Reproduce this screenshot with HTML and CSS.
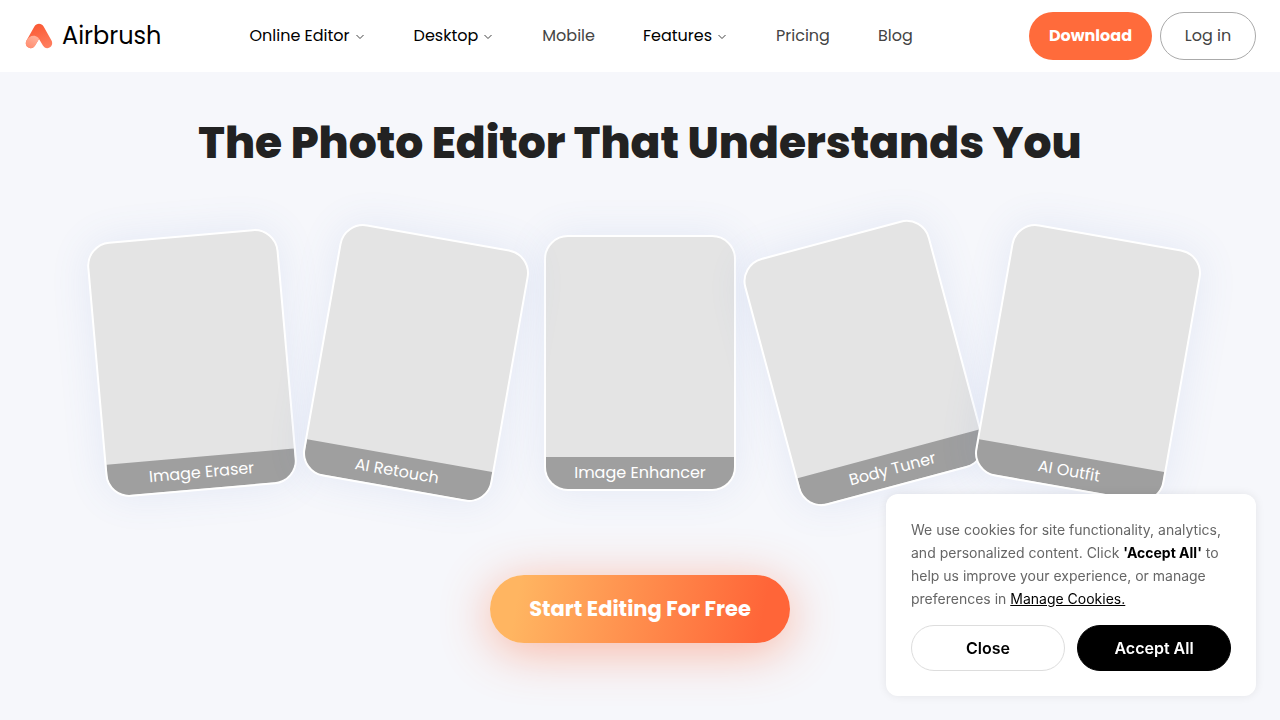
FILE: index.html
```html
<!DOCTYPE html>
<html lang="en">
<head>
    <meta charset="UTF-8">
    <meta name="viewport" content="width=device-width, initial-scale=1">
    <title>Airbrush</title>
    <link rel="stylesheet" href="styles.css">
</head>
<body>
    <header class="header">
        <a class="logo" href="#">
            <svg class="logo-icon" width="28" height="28" viewBox="0 0 28 28" fill="none" aria-hidden="true">
                <defs>
                    <linearGradient id="logoMain" x1="14" y1="2" x2="22" y2="26" gradientUnits="userSpaceOnUse">
                        <stop offset="0" stop-color="#fa5a35"/>
                        <stop offset="1" stop-color="#ff7f60"/>
                    </linearGradient>
                    <linearGradient id="logoFold" x1="11" y1="14" x2="4" y2="26" gradientUnits="userSpaceOnUse">
                        <stop offset="0" stop-color="#ffb29c"/>
                        <stop offset="1" stop-color="#ff8d70"/>
                    </linearGradient>
                </defs>
                <path d="M9.4 4.400C11.500 1 16.500 1 18.600 4.400L26.500 18.500C28 21.400 26.900 24.400 24.500 25.600C22 26.800 19.300 26 17.900 23.600L14 17L10.100 23.600C8.700 26 6 26.800 3.500 25.600C1.100 24.400 0 21.400 1.500 18.500Z" fill="url(#logoMain)"/>
                <path d="M1.500 18.500C3.600 14.600 8.600 11.800 13 15.600C13.600 16.200 13.800 16.600 14 17L10.100 23.600C8.700 26 6 26.800 3.500 25.600C1.100 24.400 0 21.400 1.500 18.500Z" fill="url(#logoFold)"/>
            </svg>
            <span>Airbrush</span>
        </a>

        <nav class="nav">
            <button class="nav-item nav-menu" type="button">Online Editor
                <svg class="chevron" width="12" height="12" viewBox="0 0 12 12" aria-hidden="true"><path d="M2.500 5L6 8.500L9.500 5"/></svg>
            </button>
            <button class="nav-item nav-menu" type="button">Desktop
                <svg class="chevron" width="12" height="12" viewBox="0 0 12 12" aria-hidden="true"><path d="M2.500 5L6 8.500L9.500 5"/></svg>
            </button>
            <a class="nav-item" href="#">Mobile</a>
            <button class="nav-item nav-menu" type="button">Features
                <svg class="chevron" width="12" height="12" viewBox="0 0 12 12" aria-hidden="true"><path d="M2.500 5L6 8.500L9.500 5"/></svg>
            </button>
            <a class="nav-item" href="#">Pricing</a>
            <a class="nav-item" href="#">Blog</a>
        </nav>

        <div class="actions">
            <a class="btn btn-download" href="#">Download</a>
            <button class="btn btn-login" type="button">Log in</button>
        </div>
    </header>

    <main class="hero">
        <h1>The Photo Editor That Understands You</h1>

        <div class="cards">
            <a class="card tilt-left" href="#"><span class="card-label">Image Eraser</span></a>
            <a class="card tilt-right" href="#"><span class="card-label">AI Retouch</span></a>
            <a class="card" href="#"><span class="card-label">Image Enhancer</span></a>
            <a class="card tilt-left-more" href="#"><span class="card-label">Body Tuner</span></a>
            <a class="card tilt-right" href="#"><span class="card-label">AI Outfit</span></a>
        </div>

        <a class="cta" href="#">Start Editing For Free</a>
    </main>

    <section class="cookies" aria-label="Cookies">
        <p>We use cookies for site functionality, analytics, and personalized content. Click <strong>'Accept All'</strong> to help us improve your experience, or manage preferences in <a href="#">Manage Cookies.</a></p>
        <div class="cookies-buttons">
            <button class="btn-close" type="button">Close</button>
            <button class="btn-accept" type="button">Accept All</button>
        </div>
    </section>
</body>
</html>
```

FILE: styles.css
```css
* {
    box-sizing: border-box;
}

body {
    margin: 0;
    min-height: 100vh;
    background: #f6f7fb;
    color: #222;
    font-family: Poppins, Inter, sans-serif;
    font-size: 16px;
    overflow-x: hidden;
}

a {
    color: inherit;
    text-decoration: none;
}

button {
    font: inherit;
    cursor: pointer;
}

.header {
    display: flex;
    align-items: center;
    height: 72px;
    padding: 0 24px;
    background: #fff;
}

.logo {
    display: flex;
    align-items: center;
    gap: 9px;
    padding-left: 1px;
    color: #000;
    font-size: 24px;
    line-height: 36px;
}

.nav {
    display: flex;
    align-items: center;
    gap: 48px;
    margin-left: 88px;
}

.nav-item {
    display: flex;
    align-items: center;
    gap: 4px;
    padding: 0;
    border: none;
    background: none;
    color: #444;
    line-height: 24px;
    white-space: nowrap;
}

.nav-menu {
    color: #000;
}

.chevron {
    fill: none;
    stroke: #444;
    stroke-width: 1;
}

.actions {
    display: flex;
    gap: 8px;
    margin-left: auto;
}

.btn {
    display: flex;
    align-items: center;
    justify-content: center;
    height: 48px;
    padding: 0 20px 2px;
    border-radius: 24px;
    white-space: nowrap;
}

.btn-download {
    background: #ff6b3b;
    color: #fff;
    font-weight: 700;
}

.btn-login {
    min-width: 96px;
    border: 1px solid #aaa;
    background: #fff;
    color: #444;
}

.hero {
    display: flex;
    flex-direction: column;
    align-items: center;
    padding: 35px 24px 76px;
}

h1 {
    margin: 0;
    font-size: 44px;
    font-weight: 800;
    line-height: 72px;
    text-align: center;
}

.cards {
    display: flex;
    justify-content: center;
    gap: 32px;
    margin-top: 56px;
}

.card {
    display: flex;
    flex-direction: column;
    justify-content: flex-end;
    width: 192px;
    height: 256px;
    border: 2px solid #fff;
    border-radius: 24px;
    background: #e4e4e4;
    box-shadow: 0 0 40px rgba(80, 120, 200, 0.11);
    overflow: hidden;
}

.card-label {
    background: #9f9f9f;
    color: #fff;
    line-height: 32px;
    text-align: center;
}

.tilt-left {
    transform: rotate(-5deg);
}

.tilt-left-more {
    transform: rotate(-15deg);
}

.tilt-right {
    transform: rotate(10deg);
}

.cta {
    min-width: 300px;
    margin-top: 84px;
    padding: 0 32px;
    border-radius: 34px;
    background: linear-gradient(100deg, #ffb561 10%, #ff6538 90%);
    box-shadow: 0 8px 50px rgba(255, 101, 56, 0.45);
    color: #fff;
    font-size: 21px;
    font-weight: 700;
    line-height: 68px;
    text-align: center;
}

.cookies {
    position: fixed;
    right: 24px;
    bottom: 24px;
    width: 370px;
    padding: 24px 25px 25px;
    border-radius: 12px;
    background: #fff;
    box-shadow: 0 0 10px rgba(0, 0, 0, 0.08);
    font-family: Inter, sans-serif;
}

.cookies p {
    margin: 0 0 15px;
    color: #666;
    font-size: 14px;
    line-height: 23px;
}

.cookies strong {
    color: #000;
}

.cookies a {
    color: #000;
    text-decoration: underline;
}

.cookies-buttons {
    display: flex;
    gap: 12px;
}

.cookies-buttons button {
    flex: 1;
    height: 46px;
    border: 1px solid #ddd;
    border-radius: 23px;
    background: #fff;
    color: #000;
    font-weight: 600;
}

.cookies-buttons .btn-accept {
    border-color: #000;
    background: #000;
    color: #fff;
}
```
